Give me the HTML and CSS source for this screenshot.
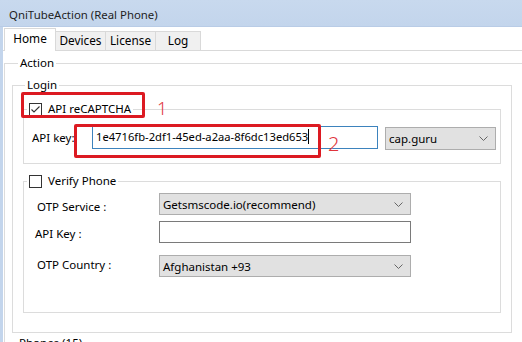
FILE: index.html
```html
<!DOCTYPE html>
<html lang="en">
<head>
<meta charset="utf-8">
<title>QniTubeAction (Real Phone)</title>
<link rel="stylesheet" href="styles.css">
</head>
<body>
<div class="window">
  <div class="titlebar">QniTubeAction (Real Phone)</div>
  <div class="client">
    <div class="tabs">
      <div class="tab tab-active">Home</div>
      <div class="tab">Devices</div>
      <div class="tab">License</div>
      <div class="tab tab-log">Log</div>
    </div>
    <div class="page">
      <fieldset class="group group-action">
        <legend class="legend legend-action">Action</legend>
        <fieldset class="group group-login">
          <legend class="legend legend-login">Login</legend>
          <fieldset class="group group-sub group-captcha">
            <legend class="legend check-legend">
              <span class="checkbox"><svg class="check-mark" width="11" height="11" viewBox="0 0 11 11"><path d="M1.5 5.5 L4 8 L9.5 2.5" fill="none" stroke="#333" stroke-width="1.1"/></svg></span>
              <span class="check-label">API reCAPTCHA</span>
              <span class="mark mark-box-1"></span>
              <span class="mark-num mark-num-1">1</span>
            </legend>
            <div class="key-row">
              <span class="key-label">API key:</span>
              <div class="textbox textbox-focus"><span class="caret-text">1e4716fb-2df1-45ed-a2aa-8f6dc13ed653</span></div>
              <div class="combo combo-provider">
                <span class="combo-text">cap.guru</span>
                <svg class="chevron" width="9" height="5" viewBox="0 0 9 5"><path d="M0.5 0.5 L4.5 4.5 L8.5 0.5" fill="none" stroke="#666" stroke-width="1"/></svg>
              </div>
              <span class="mark mark-box-2"></span>
              <span class="mark-num mark-num-2">2</span>
            </div>
          </fieldset>
          <fieldset class="group group-sub group-verify">
            <legend class="legend check-legend">
              <span class="checkbox"></span>
              <span class="check-label">Verify Phone</span>
            </legend>
            <div class="form-row row-service">
              <span class="form-label label-service">OTP Service :</span>
              <div class="combo combo-wide">
                <span class="combo-text">Getsmscode.io(recommend)</span>
                <svg class="chevron" width="9" height="5" viewBox="0 0 9 5"><path d="M0.5 0.5 L4.5 4.5 L8.5 0.5" fill="none" stroke="#666" stroke-width="1"/></svg>
              </div>
            </div>
            <div class="form-row row-key">
              <span class="form-label label-key">API Key :</span>
              <div class="textbox textbox-wide"></div>
            </div>
            <div class="form-row row-country">
              <span class="form-label label-country">OTP Country :</span>
              <div class="combo combo-wide">
                <span class="combo-text">Afghanistan +93</span>
                <svg class="chevron" width="9" height="5" viewBox="0 0 9 5"><path d="M0.5 0.5 L4.5 4.5 L8.5 0.5" fill="none" stroke="#666" stroke-width="1"/></svg>
              </div>
            </div>
          </fieldset>
        </fieldset>
        <fieldset class="group group-phones">
          <legend class="legend legend-phones">Phones (15)</legend>
        </fieldset>
      </fieldset>
    </div>
  </div>
</div>
</body>
</html>
```
FILE: styles.css
```css
html, body {
  margin: 0;
  padding: 0;
}
body {
  width: 522px;
  height: 342px;
  overflow: hidden;
  background: #ffffff;
  font-family: "Noto Sans", "Open Sans", sans-serif;
  font-size: 11.5px;
  color: #000;
}
.window {
  display: flex;
  flex-direction: column;
  height: 342px;
}
.titlebar {
  flex: none;
  height: 27px;
  box-sizing: border-box;
  padding: 3px 0 0 9px;
  line-height: 24px;
  font-size: 11.4px;
  color: #1e1e1e;
  background: linear-gradient(180deg, #c8d9ee 0%, #c3d5ec 100%);
  border-bottom: 1px solid #b9cce6;
}
.client {
  flex: 1;
  min-height: 0;
  display: flex;
  flex-direction: column;
  border-left: 3px solid #c3d5ec;
  overflow: hidden;
}
.tabs {
  flex: none;
  display: flex;
  align-items: flex-end;
  height: 23px;
  padding-left: 1px;
  border-bottom: 1px solid #d9d9d9;
}
.tab {
  box-sizing: border-box;
  width: 51px;
  height: 19px;
  line-height: 17px;
  text-align: center;
  background: #f0f0f0;
  border: 1px solid #d9d9d9;
  border-bottom: none;
  margin-left: -1px;
  font-size: 11.8px;
}
.tab-active {
  position: relative;
  z-index: 1;
  height: 23px;
  width: 52px;
  line-height: 19px;
  margin-left: 0;
  margin-bottom: -1px;
  background: #ffffff;
  border-color: #d9d9d9;
}
.tab-log {
  width: 46px;
}
.page {
  flex: 1;
  min-height: 0;
}
.group {
  margin: 0;
  padding: 0;
  border: 1px solid #dcdcdc;
  min-width: 0;
  box-sizing: border-box;
}
.legend {
  padding: 0 2px;
  line-height: 16px;
  height: 16px;
}
.group-action {
  margin: 4px 0 0 1px;
  width: 560px;
}
.legend-action {
  margin-left: 13px;
}
.group-login {
  margin: 6px 0 0 7px;
  width: 500px;
  padding-bottom: 19px;
}
.legend-login {
  margin-left: 12px;
}
.group-sub {
  margin-left: 10px;
  width: 478px;
}
.group-captcha {
  margin-top: 8px;
  padding-bottom: 13px;
}
.group-verify {
  margin-top: 9px;
  padding-bottom: 35px;
}
.check-legend {
  position: relative;
  margin-left: 3px;
  display: flex;
  align-items: center;
}
.checkbox {
  display: inline-flex;
  align-items: center;
  justify-content: center;
  box-sizing: border-box;
  width: 13px;
  height: 13px;
  border: 1px solid #333;
  background: #fff;
}
.check-label {
  margin-left: 6px;
}
.mark {
  position: absolute;
  box-sizing: border-box;
  border: 3px solid #dc1a22;
  border-radius: 2px;
}
.mark-box-1 {
  left: -6px;
  top: -9px;
  width: 124px;
  height: 26px;
}
.mark-num {
  position: absolute;
  color: #e0343a;
  font-family: "Noto Sans", sans-serif;
  font-weight: 300;
}
.mark-num-1 {
  left: 130px;
  top: -2px;
  font-size: 18px;
  line-height: 18px;
}
.key-row {
  position: relative;
  display: flex;
  align-items: flex-start;
  margin-top: 9px;
  padding-left: 8px;
  height: 24px;
}
.key-label {
  width: 60px;
  line-height: 23px;
}
.textbox {
  box-sizing: border-box;
  background: #fff;
  border: 1px solid #7a7a7a;
}
.textbox-focus {
  width: 286px;
  height: 23px;
  border-color: #3d83bd;
  padding-left: 3px;
  line-height: 20px;
}
.caret-text {
  border-right: 1px solid #000;
  padding-right: 0;
  font-size: 11.2px;
}
.combo {
  box-sizing: border-box;
  display: flex;
  align-items: center;
  justify-content: space-between;
  background: #e1e1e1;
  border: 1px solid #adadad;
  padding: 0 7px 0 3px;
}
.combo-provider {
  margin: 1px 0 0 7px;
  width: 111px;
  height: 23px;
}
.chevron {
  flex: none;
}
.mark-box-2 {
  left: 50px;
  top: -2px;
  width: 247px;
  height: 34px;
}
.mark-num-2 {
  left: 304px;
  top: 8px;
  font-size: 20px;
  line-height: 20px;
}
.form-row {
  display: flex;
  align-items: flex-start;
  padding-left: 13px;
  height: 22px;
}
.row-service {
  margin-top: 4px;
}
.row-key {
  margin-top: 6px;
}
.row-country {
  margin-top: 12px;
}
.form-label {
  width: 122px;
  line-height: 16px;
}
.label-service {
  padding-top: 6px;
}
.label-key {
  padding-top: 5px;
  margin-left: -2px;
  width: 124px;
}
.label-country {
  padding-top: 2px;
}
.combo-wide {
  width: 252px;
  height: 22px;
}
.textbox-wide {
  width: 252px;
  height: 22px;
}
.group-phones {
  margin: 2px 0 0 7px;
  width: 500px;
  height: 40px;
}
.legend-phones {
  margin-left: 4px;
}
```
